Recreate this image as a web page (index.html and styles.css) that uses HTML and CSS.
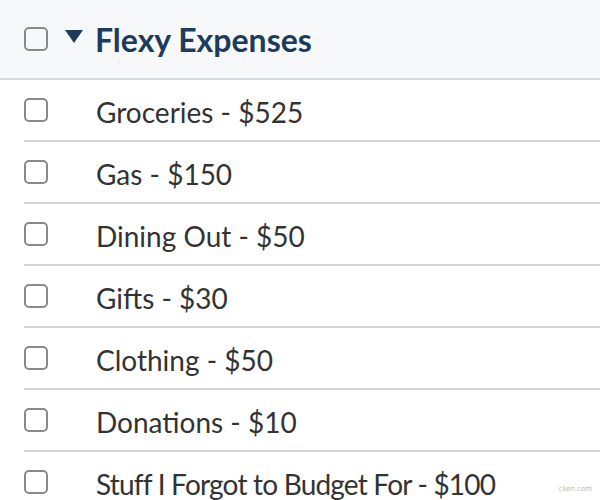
FILE: index.html
```html
<!DOCTYPE html>
<html>
<head>
<meta charset="utf-8">
<link rel="stylesheet" href="styles.css">
</head>
<body>
<div class="list">
  <div class="header">
    <span class="box"></span>
    <span class="caret"></span>
    <span class="title">Flexy Expenses</span>
  </div>
  <div class="row"><span class="box"></span><span class="label">Groceries - $525</span></div>
  <div class="row"><span class="box"></span><span class="label">Gas - $150</span></div>
  <div class="row"><span class="box"></span><span class="label">Dining Out - $50</span></div>
  <div class="row"><span class="box"></span><span class="label">Gifts - $30</span></div>
  <div class="row"><span class="box"></span><span class="label">Clothing - $50</span></div>
  <div class="row"><span class="box"></span><span class="label">Donations - $10</span></div>
  <div class="row last"><span class="box"></span><span class="label tight">Stuff I Forgot to Budget For - $100</span></div>
</div>
<span class="mark">clien.com</span>
</body>
</html>
```
FILE: styles.css
```css
html, body {
  margin: 0;
  padding: 0;
  background: #ffffff;
  font-family: Lato, "Open Sans", sans-serif;
}
.list {
  display: flex;
  flex-direction: column;
}
.header {
  height: 78px;
  background: #f7f8fa;
  border-bottom: 2px solid #d8d8d8;
  display: flex;
  align-items: center;
  padding-left: 24px;
}
.box {
  width: 20px;
  height: 20px;
  border: 2px solid #8a8a8a;
  border-radius: 5px;
  flex: none;
  box-sizing: content-box;
}
.caret {
  width: 0;
  height: 0;
  border-left: 9px solid transparent;
  border-right: 9px solid transparent;
  border-top: 13px solid #1d3c5c;
  margin-left: 17px;
  margin-right: 12px;
  margin-top: -5px;
}
.title {
  font-weight: 700;
  font-size: 32px;
  color: #1d3c5c;
}
.row {
  margin-left: 24px;
  height: 60px;
  border-bottom: 2px solid #d4d4d4;
  display: flex;
  align-items: center;
}
.row.last {
  border-bottom: none;
}
.label {
  margin-left: 48px;
  padding-top: 4px;
  font-size: 28px;
  color: #333333;
}
.label.tight {
  letter-spacing: -0.8px;
}
.mark {
  position: absolute;
  right: 8px;
  bottom: 7px;
  font-size: 7px;
  color: #b8b8b8;
  font-family: "DejaVu Sans", sans-serif;
}
```
